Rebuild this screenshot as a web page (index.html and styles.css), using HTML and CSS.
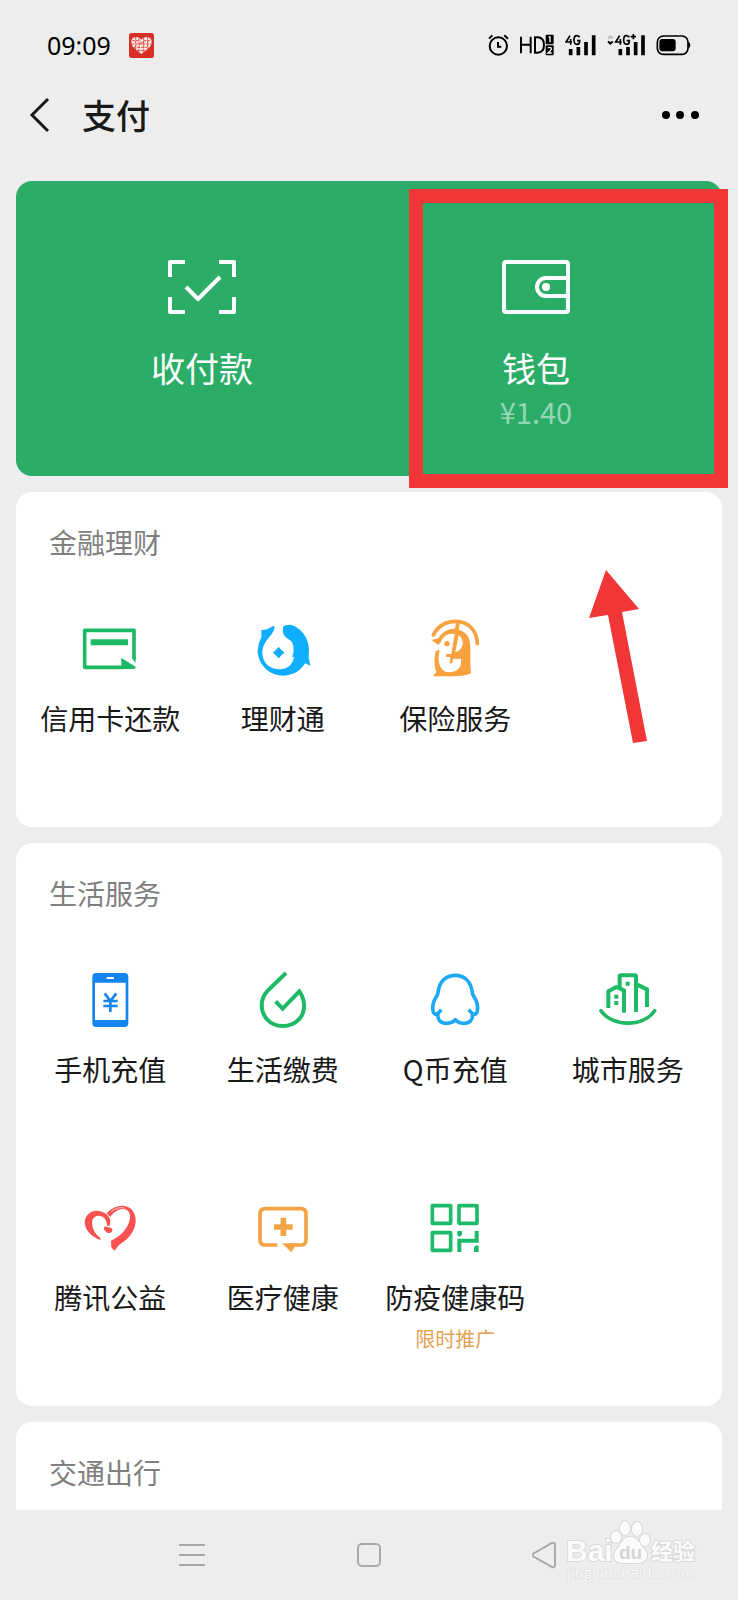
FILE: index.html
```html
<!DOCTYPE html>
<html lang="zh-CN">
<head>
<meta charset="utf-8">
<meta name="viewport" content="width=device-width, initial-scale=1">
<title>支付</title>
<link rel="stylesheet" href="styles.css">
</head>
<body>
<div class="status">
  <span class="clock">09:09</span>
  <svg class="app-badge" width="25" height="25" viewBox="0 0 75 75" aria-hidden="true">
    <rect width="75" height="75" rx="7" fill="#d92f27"/>
    <path d="M37 63C25 53 7 44 7 27C7 10 28 8 37 20C46 8 68 10 68 27C68 44 49 53 37 63Z" fill="#fbe9e6"/>
    <path d="M10 23H30M8 33H66M14 43H60M24 53H50M44 23H66M20 12V50M30 16V60M44 14V60M56 12V48M33 25L43 35M43 25L32 36" stroke="#d92f27" stroke-width="2.5" stroke-dasharray="8 3" fill="none"/>
  </svg>
  <div class="indicators">
    <svg width="21" height="22" viewBox="0 0 63 66" aria-hidden="true">
      <circle cx="31" cy="36" r="26" fill="none" stroke="#000" stroke-width="6"/>
      <path d="M30 24V38H40" fill="none" stroke="#000" stroke-width="6"/>
      <path d="M3 14L13 4M49 4L60 14" stroke="#000" stroke-width="6"/>
    </svg>
    <svg width="34" height="22" viewBox="0 0 102 66" aria-hidden="true">
      <path d="M3 8V58M32 8V58M3 32H32M45 10V56H52C66 56 72 48 72 33C72 18 66 10 52 10Z" fill="none" stroke="#000" stroke-width="6"/>
      <rect x="77" y="2" width="24" height="29" rx="3"/>
      <rect x="77" y="34" width="24" height="30" rx="3"/>
      <path d="M86 9H90V25" fill="none" stroke="#fff" stroke-width="4"/>
      <path d="M84 43Q84 40 89 40Q94 40 94 44Q94 48 84 57H95" fill="none" stroke="#fff" stroke-width="4"/>
    </svg>
    <svg width="31" height="22" viewBox="0 0 93 66" aria-hidden="true">
      <path d="M15 5L3 24H21M17 15V32M44 10Q40 5 35 5Q27 5 27 18Q27 31 36 31Q44 31 44 20H36" fill="none" stroke="#000" stroke-width="5"/>
      <path d="M17 45V64M40 39V64M63 24V64M86 4V64" stroke="#000" stroke-width="11"/>
    </svg>
    <svg width="38" height="22" viewBox="0 0 114 66" aria-hidden="true">
      <path d="M3 14L10 7L17 14" fill="none" stroke="#bbb" stroke-width="6"/>
      <path d="M3 22L10 29L17 22" fill="none" stroke="#000" stroke-width="6"/>
      <path d="M38 5L26 24H44M40 15V32M67 10Q63 5 58 5Q50 5 50 18Q50 31 59 31Q67 31 67 20H59M71 8H87M79 0V16" fill="none" stroke="#000" stroke-width="5"/>
      <path d="M40 45V64M63 39V64M86 24V64M108 4V64" stroke="#000" stroke-width="11"/>
    </svg>
    <svg width="35" height="22" viewBox="0 0 105 66" aria-hidden="true">
      <rect x="4" y="6" width="92" height="55" rx="18" fill="none" stroke="#000" stroke-width="5"/>
      <rect x="10" y="15" width="49" height="37" rx="9"/>
      <path d="M97 23Q103 25 103 33Q103 42 97 44Z"/>
    </svg>
  </div>
</div>

<header class="topbar">
  <button class="icon-button" type="button" aria-label="返回">
    <svg width="22" height="36" viewBox="0 0 22 36" aria-hidden="true"><path d="M19 2L3 18L19 34" fill="none" stroke="#191919" stroke-width="3"/></svg>
  </button>
  <h1 class="page-title">支付</h1>
  <button class="icon-button more" type="button" aria-label="更多">
    <svg width="38" height="10" viewBox="0 0 38 10" aria-hidden="true"><circle cx="4" cy="5" r="4"/><circle cx="18" cy="5" r="4"/><circle cx="33" cy="5" r="4"/></svg>
  </button>
</header>

<main class="content">
  <section class="wallet">
    <a class="wallet-item" href="#pay">
      <svg width="70" height="56" viewBox="0 0 70 56" aria-hidden="true">
        <path d="M18 3H3V18M52 3H67V18M3 38V53H18M67 38V53H52" fill="none" stroke="#fff" stroke-width="4" stroke-linejoin="round"/>
        <path d="M19 28L31 40L53 18" fill="none" stroke="#fff" stroke-width="4" stroke-linejoin="round"/>
      </svg>
      <span class="wallet-label">收付款</span>
    </a>
    <a class="wallet-item" href="#wallet">
      <svg width="70" height="56" viewBox="0 0 70 56" aria-hidden="true">
        <rect x="3" y="3" width="64" height="50" rx="2" fill="none" stroke="#fff" stroke-width="4"/>
        <path d="M67 19H45A9 9 0 0 0 45 37H67" fill="none" stroke="#fff" stroke-width="4"/>
        <circle cx="45" cy="28" r="4" fill="#fff"/>
      </svg>
      <span class="wallet-label">钱包</span>
      <span class="balance">¥1.40</span>
      <span class="highlight"></span>
    </a>
  </section>

  <section class="card">
    <h2 class="card-title">金融理财</h2>
    <div class="grid">
      <a class="service" href="#credit">
        <svg class="service-icon" viewBox="151 327 180 180" aria-hidden="true">
          <path d="M313 448V361H165V472H280" fill="none" stroke="#1db964" stroke-width="11" stroke-linejoin="round"/>
          <path d="M183 397H295" stroke="#1db964" stroke-width="18"/>
          <path d="M275 444L318 470Q318 477 312 477H275ZM308 446L318 458V440Z" fill="#1db964"/>
        </svg>
        <span class="service-name">信用卡还款</span>
      </a>
      <a class="service" href="#licaitong">
        <svg class="service-icon" viewBox="668 327 180 180" aria-hidden="true">
          <path fill="#10aeff" d="M693 360Q707 361 719 353Q731 345 733 349Q733 362 724 373C708 392 696 405 696 430C697 462 722 479 751 478C777 476 788 459 791 441L785 440C792 428 791 406 784 395C778 387 772 387 765 380C757 372 756 358 759 350Q763 344 778 344C808 348 836 382 836 419L835 443L840 467L824 460C811 483 788 496 760 497C714 497 682 461 682 420Q683 399 693 382Z"/>
          <path fill="#10aeff" d="M745 412Q751 422 761 428Q751 434 745 444Q739 434 729 428Q739 422 745 412Z" stroke="#10aeff" stroke-width="3"/>
        </svg>
        <span class="service-name">理财通</span>
      </a>
      <a class="service" href="#insurance">
        <svg class="service-icon" viewBox="166 207 180 180" aria-hidden="true">
          <path d="M191 255C206 225 232 214 259 214C298 215 322 243 323 281" fill="none" stroke="#f9a13e" stroke-width="11" stroke-linecap="round"/>
          <path fill="#f9a13e" d="M185 270L206 265C216 247 235 235 256 236L259 220L271 220L267 239C291 245 302 264 302 288V335C302 350 304 358 304 370Q288 379 250 379H190Q194 371 200 366C193 350 194 325 197 307Q201 299 208 300Q211 302 208 311C204 335 211 367 240 367C258 366 272 357 274 340V327L250 326L248 340H240L242 322L229 320V312H245L255 252C237 248 219 258 214 276L206 285ZM267 255L257 306C276 303 284 281 276 266Q273 258 267 255Z"/>
          <circle cx="232" cy="281" r="8" fill="#f9a13e"/>
        </svg>
        <span class="service-name">保险服务</span>
      </a>
    </div>
    <svg class="arrow" width="58" height="173" viewBox="0 0 58 173" aria-hidden="true"><path d="M17 0L50 39L33 42L58 171L44 173L19 45L0 48Z" fill="#f03636"/></svg>
  </section>

  <section class="card">
    <h2 class="card-title">生活服务</h2>
    <div class="grid">
      <a class="service" href="#topup">
        <svg class="service-icon" viewBox="151 60 180 180" aria-hidden="true">
          <path fill="#1485ee" fill-rule="evenodd" d="M200 69H284Q296 69 296 81V219Q296 231 284 231H200Q188 231 188 219V81Q188 69 200 69ZM196 98V210H288V98ZM231 81V87H253V81Z"/>
          <path d="M225 130L242 153L260 130M242 153V186M221 153H264M221 168H264" fill="none" stroke="#1485ee" stroke-width="8"/>
        </svg>
        <span class="service-name">手机充值</span>
      </a>
      <a class="service" href="#utilities">
        <svg class="service-icon" viewBox="668 60 180 180" aria-hidden="true">
          <path d="M767 69L713 121C687 148 690 184 709 207C734 235 780 235 805 209C829 184 824 148 807 124L757 176L736 154" fill="none" stroke="#1db964" stroke-width="12"/>
        </svg>
        <span class="service-name">生活缴费</span>
      </a>
      <a class="service" href="#qcoin">
        <svg class="service-icon" viewBox="166 60 180 180" aria-hidden="true">
          <path d="M215 179C208 187 207 191 199 193C187 193 187 165 194 151C198 142 205 135 205 128C209 91 232 76 257 76C282 76 304 92 308 128C308 135 315 142 319 151C326 165 326 193 314 193C306 191 305 187 297 179M205 190C202 211 214 220 231 220C247 220 252 215 257 209C262 215 267 220 282 220C299 220 311 211 308 190" fill="none" stroke="#1fa9f3" stroke-width="11" stroke-linejoin="round"/>
        </svg>
        <span class="service-name">Q币充值</span>
      </a>
      <a class="service" href="#city">
        <svg class="service-icon" viewBox="683 60 180 180" aria-hidden="true">
          <path d="M714 174V124L738 111L761 121V188M748 112V78Q748 76 752 76H793Q797 76 797 80V186M799 103L830 118V171" fill="none" stroke="#1db964" stroke-width="12" stroke-linejoin="round"/>
          <path d="M692 182C725 231 818 233 853 182" fill="none" stroke="#1db964" stroke-width="11" stroke-linecap="round"/>
          <path d="M766 95H778V107H766ZM732 134H744V146H732ZM732 153H744V165H732Z" fill="#1db964"/>
        </svg>
        <span class="service-name">城市服务</span>
      </a>
      <a class="service" href="#charity">
        <svg class="service-icon" viewBox="151 54 180 180" aria-hidden="true">
          <path fill="#fa5151" d="M214 181C182 168 165 148 165 125C167 104 184 91 204 92C224 94 242 107 242 124L240 137L233 138C231 119 222 107 206 107C191 108 185 121 188 136C190 152 200 165 210 172Z"/>
          <path fill="#fa5151" d="M230 100C245 85 262 76 282 77C306 80 320 100 318 127C315 159 288 184 268 195L254 212L245 202L244 182C270 172 297 145 301 115C303 99 296 88 279 87C263 88 252 98 242 110Z"/>
          <path fill="none" stroke="#fff" stroke-width="2" d="M244 96C258 84 274 80 286 85"/>
          <path fill="#fa5151" d="M226 139L245 144Q251 149 246 156Q241 160 233 158L223 149Q222 142 226 139Z"/>
        </svg>
        <span class="service-name">腾讯公益</span>
      </a>
      <a class="service" href="#health">
        <svg class="service-icon" viewBox="668 54 180 180" aria-hidden="true">
          <path d="M741 195H705Q689 195 689 179V102Q689 86 705 86H811Q827 86 827 102V179Q827 195 811 195H776" fill="none" stroke="#f2a343" stroke-width="11"/>
          <path d="M755 190H800L783 217Z" fill="#f2a343"/>
          <path d="M759 113V168M731 141H787" stroke="#f2a343" stroke-width="17"/>
        </svg>
        <span class="service-name">医疗健康</span>
      </a>
      <a class="service" href="#code">
        <svg class="service-icon" viewBox="166 54 180 180" aria-hidden="true">
          <path d="M188 77H243V130H188ZM268 77H322V130H268ZM188 158H243V211H188Z" fill="none" stroke="#1dbb69" stroke-width="11" stroke-linejoin="round"/>
          <path d="M269 216V182H321V153" fill="none" stroke="#1dbb69" stroke-width="12"/>
          <path d="M263 153H277V164L270 171L263 166ZM327 216H313V202L321 195L327 199Z" fill="#1dbb69"/>
        </svg>
        <span class="service-name">防疫健康码</span>
        <span class="promo">限时推广</span>
      </a>
    </div>
  </section>

  <section class="card card-cut">
    <h2 class="card-title">交通出行</h2>
  </section>
</main>

<nav class="sysnav">
  <button class="nav-button" type="button" aria-label="菜单">
    <svg width="26" height="26" viewBox="0 0 26 26" aria-hidden="true"><path d="M0 3H26M0 13H26M0 23H26" stroke="#a9a9a9" stroke-width="2"/></svg>
  </button>
  <button class="nav-button" type="button" aria-label="主页">
    <svg width="26" height="26" viewBox="0 0 26 26" aria-hidden="true"><rect x="2" y="2" width="22" height="22" rx="4" fill="none" stroke="#a9a9a9" stroke-width="2"/></svg>
  </button>
  <button class="nav-button" type="button" aria-label="后退">
    <svg width="28" height="28" viewBox="0 0 28 28" aria-hidden="true"><path d="M1.500 12.500L20 2Q23 1 23 4V24Q23 27 20 26L1.500 15.500Q0 14 1.500 12.500Z" fill="none" stroke="#a9a9a9" stroke-width="2"/></svg>
  </button>
  <svg class="watermark" width="134" height="64" viewBox="0 0 134 64" role="img" aria-label="Baidu 经验">
    <g class="mark">
      <text class="mark-latin" x="0" y="41">Bai</text>
      <ellipse cx="50" cy="17" rx="5" ry="6"/>
      <ellipse cx="59" cy="8" rx="5" ry="7"/>
      <ellipse cx="71" cy="9" rx="5" ry="7"/>
      <ellipse cx="79" cy="20" rx="5" ry="6"/>
      <path d="M64 17C72 17 74 25 79 30C84 37 79 43 72 43H55C47 42 46 34 51 29C56 24 56 17 64 17Z"/>
      <text class="mark-cn" x="85" y="39">经验</text>
      <text class="mark-url" x="1" y="58">jingyan.baidu.com</text>
    </g>
    <text class="mark-du" x="53" y="39">du</text>
  </svg>
</nav>
</body>
</html>
```
FILE: styles.css
```css
* {
  box-sizing: border-box;
}

body {
  margin: 0;
  min-height: 100vh;
  display: flex;
  flex-direction: column;
  background: #ededed;
  color: #191919;
  font-family: "Noto Sans CJK SC", "Noto Sans", sans-serif;
  font-weight: 400;
}

a {
  color: inherit;
  text-decoration: none;
}

button {
  padding: 0;
  border: 0;
  background: none;
}

svg {
  display: block;
  flex: none;
}

.status {
  display: flex;
  align-items: center;
  height: 90px;
  padding: 0 47px;
}

.clock {
  font-family: "Noto Sans", sans-serif;
  font-size: 25px;
  line-height: 34px;
  color: #000;
}

.app-badge {
  margin-left: 18px;
}

.indicators {
  display: flex;
  gap: 11px;
  margin-left: auto;
}

.topbar {
  display: flex;
  align-items: center;
  height: 50px;
  padding: 0 38px 0 29px;
}

.icon-button {
  display: block;
}

.page-title {
  margin: 0 0 0 31px;
  font-size: 34px;
  font-weight: 500;
  line-height: 48px;
}

.more {
  margin-left: auto;
}

.content {
  display: flex;
  flex: 1;
  flex-direction: column;
  gap: 16px;
  padding: 41px 16px 0;
}

.wallet {
  display: grid;
  grid-template-columns: 1fr 1fr;
  min-height: 295px;
  padding: 0 19px;
  border-radius: 16px;
  background: #2bad68;
  color: #fff;
}

.wallet-item {
  position: relative;
  display: flex;
  flex-direction: column;
  align-items: center;
  padding: 78px 0 40px;
}

.wallet-label {
  margin-top: 30px;
  font-size: 34px;
  line-height: 46px;
}

.balance {
  font-size: 29px;
  line-height: 40px;
  color: #95d6b3;
}

.highlight {
  position: absolute;
  inset: 8px -25px -12px 40px;
  z-index: 1;
  border: 14px solid #f03636;
}

.card {
  position: relative;
  padding: 30px 8px 4px;
  border-radius: 16px;
  background: #fff;
}

.card-cut {
  flex: 1;
  padding-bottom: 16px;
  border-radius: 16px 16px 0 0;
}

.card-title {
  margin: 0 25px;
  font-size: 28px;
  font-weight: 400;
  line-height: 40px;
  color: #808080;
}

.grid {
  display: grid;
  grid-template-columns: repeat(4, 1fr);
  grid-auto-rows: minmax(228px, auto);
  margin-top: 33px;
}

.service {
  display: flex;
  flex-direction: column;
  align-items: center;
  padding-top: 24px;
}

.service-icon {
  width: 60px;
  height: 60px;
}

.service-name {
  margin-top: 19px;
  font-size: 28px;
  line-height: 40px;
  white-space: nowrap;
}

.promo {
  margin-top: 7px;
  font-size: 20px;
  line-height: 30px;
  color: #e3a251;
}

.arrow {
  position: absolute;
  top: 78px;
  right: 75px;
}

.sysnav {
  position: relative;
  display: grid;
  grid-template-columns: repeat(3, 1fr);
  height: 90px;
  padding: 0 104px;
}

.nav-button {
  display: flex;
  align-items: center;
  justify-content: center;
}

.watermark {
  position: absolute;
  top: 10px;
  right: 38px;
}

.mark {
  fill: #fbfbfb;
  stroke: #d8d8d8;
  stroke-width: 2px;
  paint-order: stroke;
}

.mark-latin {
  font: 700 30px "Liberation Sans", sans-serif;
}

.mark-cn {
  font: 700 22px "Noto Sans CJK SC", sans-serif;
}

.mark-url {
  font: 400 15px "Open Sans", sans-serif;
  stroke-width: 1px;
}

.mark-du {
  font: 700 19px "Liberation Sans", sans-serif;
  fill: #d4d4d4;
}
```
